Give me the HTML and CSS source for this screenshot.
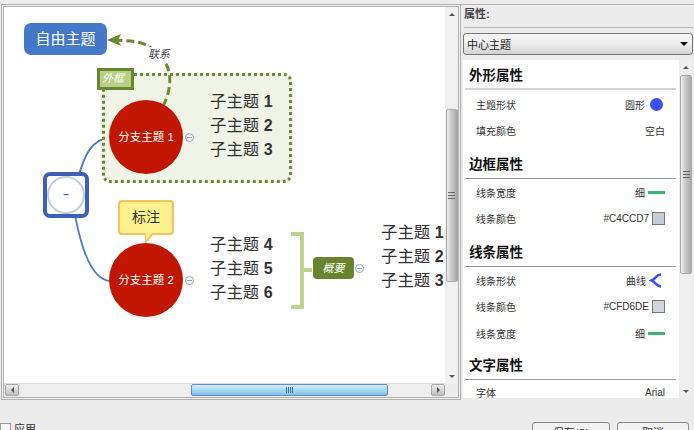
FILE: index.html
```html
<!DOCTYPE html>
<html lang="zh">
<head>
  <meta charset="UTF-8">
  <title>属性</title>
  <link rel="stylesheet" href="styles.css">
</head>
<body>
  <div class="main">
    <div class="editor">
      <div class="canvas">
        <div class="map">
          <svg class="lines" width="441" height="376" viewBox="0 0 441 376">
            <path class="branch" d="M72 171 C78 150 85 131 105 131"/>
            <path class="branch" d="M69 208 C75 240 85 274 105 274"/>
            <path class="bracket" d="M285 227 H296 V300 H285 M296 263 H306"/>
          </svg>

          <div class="node free-topic">自由主题</div>

          <div class="node boundary"></div>
          <div class="node boundary-label">外框</div>

          <svg class="lines" width="441" height="376" viewBox="0 0 441 376">
            <path class="relation" d="M157 99 C167 80 170 52 138 37 C128 33 118 34 112 33"/>
            <path class="arrow" d="M101 33 L115 27 L112 33 L115 39 Z"/>
          </svg>
          <div class="node relation-label">联系</div>

          <div class="node central"><span class="central-circle">–</span></div>

          <div class="node branch-topic branch-one">分支主题 1</div>
          <span class="node fold fold-one"></span>
          <div class="node subtopics subs-one">
            <div>子主题 <b>1</b></div>
            <div>子主题 <b>2</b></div>
            <div>子主题 <b>3</b></div>
          </div>

          <div class="node callout">标注</div>

          <div class="node branch-topic branch-two">分支主题 2</div>
          <span class="node fold fold-two"></span>
          <div class="node subtopics subs-two">
            <div>子主题 <b>4</b></div>
            <div>子主题 <b>5</b></div>
            <div>子主题 <b>6</b></div>
          </div>

          <div class="node summary">概要</div>
          <span class="node fold fold-three"></span>
          <div class="node subtopics subs-three">
            <div>子主题 <b>1</b></div>
            <div>子主题 <b>2</b></div>
            <div>子主题 <b>3</b></div>
          </div>
        </div>
      </div>

      <div class="vbar canvas-vbar">
        <span class="arrow-up"></span>
        <div class="vthumb"><span class="grip-h"></span></div>
        <span class="arrow-down"></span>
      </div>

      <div class="hbar">
        <span class="hbtn"><span class="arrow-left"></span></span>
        <div class="hthumb"><span class="grip-v"></span></div>
        <span class="hbtn"><span class="arrow-right"></span></span>
      </div>
      <div class="corner"></div>
    </div>

    <div class="side">
      <div class="side-title">属性:</div>
      <div class="combo">
        <span>中心主题</span>
        <span class="combo-arrow"></span>
      </div>
      <div class="props">
        <div class="props-body">
          <h3 class="first">外形属性</h3>
          <div class="row"><span>主题形状</span><span class="val">圆形 <i class="dot"></i></span></div>
          <div class="row"><span>填充颜色</span><span class="val">空白</span></div>

          <h3>边框属性</h3>
          <div class="row"><span>线条宽度</span><span class="val">细 <i class="dash"></i></span></div>
          <div class="row"><span>线条颜色</span><span class="val">#C4CCD7 <i class="swatch swatch-border"></i></span></div>

          <h3>线条属性</h3>
          <div class="row">
            <span>线条形状</span>
            <span class="val">曲线
              <svg class="curve" width="13" height="15" viewBox="0 0 13 15"><path d="M12 1.5 C7 1.5 7 6 2.5 7.5 C7 9 7 13.5 12 13.5"/></svg>
            </span>
          </div>
          <div class="row"><span>线条颜色</span><span class="val">#CFD6DE <i class="swatch swatch-line"></i></span></div>
          <div class="row"><span>线条宽度</span><span class="val">细 <i class="dash"></i></span></div>

          <h3 class="last">文字属性</h3>
          <div class="row"><span>字体</span><span class="val">Arial</span></div>
        </div>
        <div class="vbar props-vbar">
          <span class="arrow-up"></span>
          <div class="vthumb"><span class="grip-h"></span></div>
          <span class="arrow-down"></span>
        </div>
      </div>
    </div>
  </div>

  <div class="footer">
    <label class="apply"><i class="check"></i>应用</label>
    <div class="buttons">
      <button class="save-btn">保存(S)</button>
      <button class="cancel-btn">取消</button>
    </div>
  </div>
</body>
</html>
```

FILE: styles.css
```css
html, body {
  margin: 0;
  padding: 0;
}

body {
  width: 694px;
  height: 430px;
  overflow: hidden;
  background-color: #ececec;
  font-family: "Liberation Sans", "Noto Sans CJK SC", sans-serif;
  color: #333;
}

.main {
  display: flex;
  height: 396px;
  padding-top: 4px;
}

/* left side, the map */
.editor {
  margin-left: 1px;
  border: 3px double #b0b0b0;
  display: grid;
  grid-template-columns: 441px 13px;
  grid-template-rows: 376px 13px;
  background-color: #f0f0f0;
}

.canvas {
  position: relative;
  background-color: #fff;
  overflow: hidden;
}

.map {
  position: absolute;
  left: 2px;
  top: 0;
  width: 441px;
  height: 376px;
}

.lines {
  position: absolute;
  left: 0;
  top: 0;
}

.lines path {
  fill: none;
}

.lines .branch {
  stroke: #4a7bd0;
  stroke-width: 1.8;
}

.lines .relation {
  stroke: #6b8a2f;
  stroke-width: 3;
  stroke-dasharray: 8 4;
}

.lines .arrow {
  fill: #6b8a2f;
}

.lines .bracket {
  stroke: #bdd28e;
  stroke-width: 4;
}

.node {
  position: absolute;
  box-sizing: border-box;
}

.free-topic {
  left: 18px;
  top: 16px;
  width: 83px;
  height: 32px;
  background-color: #4478c8;
  border-radius: 7px;
  color: #fff;
  font-size: 15px;
  line-height: 32px;
  text-align: center;
}

.relation-label {
  left: 140px;
  top: 40px;
  font-size: 11px;
  font-style: italic;
  line-height: 14px;
  padding: 0 2px;
  color: #444;
  background-color: #fff;
}

.boundary {
  left: 96px;
  top: 66px;
  width: 190px;
  height: 110px;
  background-color: #f0f4e6;
  border: 3px dotted #6b8a2f;
  border-radius: 8px;
}

.boundary-label {
  left: 91px;
  top: 61px;
  width: 37px;
  height: 22px;
  background-color: #b9cf86;
  border: 3px solid #66872f;
  color: #fff;
  font-size: 11px;
  font-style: italic;
  line-height: 15px;
  padding-left: 2px;
}

.central {
  left: 37px;
  top: 165px;
  width: 46px;
  height: 46px;
  border: 4px solid #3d5fb8;
  border-radius: 7px;
  background-color: #fff;
}

.central-circle {
  display: block;
  box-sizing: border-box;
  width: 38px;
  height: 38px;
  border: 2px solid #c4ccd7;
  border-radius: 50%;
  color: #3d5fb8;
  font-size: 10px;
  font-weight: bold;
  line-height: 34px;
  text-align: center;
}

.branch-topic {
  left: 103px;
  width: 74px;
  height: 74px;
  border-radius: 50%;
  background-color: #c11700;
  color: #fff;
  font-size: 11.5px;
  line-height: 74px;
  text-align: center;
}

.branch-one {
  top: 93px;
}

.branch-two {
  top: 236px;
}

.fold {
  width: 9px;
  height: 9px;
  border: 1px solid #8aa6de;
  border-radius: 50%;
  background: linear-gradient(#8aa6de, #8aa6de) center / 5px 1px no-repeat #fff;
}

.fold-one {
  left: 179px;
  top: 126px;
}

.fold-two {
  left: 179px;
  top: 269px;
}

.fold-three {
  left: 349px;
  top: 257px;
}

.subtopics {
  font-size: 16.4px;
  color: #333;
  white-space: nowrap;
}

.subtopics div {
  height: 24px;
  line-height: 24px;
}

.subtopics b {
  font-size: 16px;
  line-height: 0;
}

.subs-one {
  left: 204px;
  top: 82px;
}

.subs-two {
  left: 204px;
  top: 225px;
}

.subs-three {
  left: 375px;
  top: 213px;
}

.callout {
  left: 112px;
  top: 193px;
  width: 56px;
  height: 35px;
  background-color: #fdf08e;
  border: 2px solid #f6c05c;
  border-radius: 4px;
  color: #333;
  font-size: 14px;
  line-height: 31px;
  text-align: center;
}

.callout::before,
.callout::after {
  content: "";
  position: absolute;
  width: 0;
  height: 0;
  border-right: 8px solid transparent;
}

.callout::before {
  left: 25px;
  bottom: -11px;
  border-top: 9px solid #f6c05c;
}

.callout::after {
  left: 26px;
  bottom: -7px;
  border-right-width: 6px;
  border-top: 7px solid #fdf08e;
}

.summary {
  left: 307px;
  top: 250px;
  width: 41px;
  height: 22px;
  background-color: #66852d;
  border-radius: 4px;
  color: #fff;
  font-size: 11px;
  font-style: italic;
  line-height: 22px;
  text-align: center;
}

/* scrollbars */
.vbar {
  display: flex;
  flex-direction: column;
  align-items: center;
  background-color: #f0f0f0;
}

.vthumb {
  width: 12px;
  display: flex;
  align-items: center;
  justify-content: center;
  background: linear-gradient(to right, #eee, #c8c8c8 45%, #a9a9a9);
  border: 1px solid #a8a8a8;
  border-radius: 2px;
  box-sizing: border-box;
}

.canvas-vbar .arrow-up {
  margin-top: 6px;
}

.canvas-vbar .vthumb {
  height: 173px;
  margin-top: 93px;
}

.canvas-vbar .arrow-down {
  margin-top: 93px;
}

.props-vbar .arrow-up {
  margin-top: 6px;
}

.props-vbar .vthumb {
  height: 199px;
  margin-top: 6px;
}

.props-vbar .arrow-down {
  margin-top: 116px;
}

.arrow-up,
.arrow-down {
  width: 0;
  height: 0;
  border-left: 3px solid transparent;
  border-right: 3px solid transparent;
}

.arrow-up {
  border-bottom: 3px solid #555;
}

.arrow-down {
  border-top: 3px solid #555;
}

.grip-h {
  width: 7px;
  height: 5px;
  border-top: 1px solid #666;
  border-bottom: 1px solid #666;
  background: linear-gradient(#666, #666) center / 100% 1px no-repeat;
}

.hbar {
  display: flex;
  align-items: flex-start;
  background-color: #eee;
  border-top: 1px solid #e0e0e0;
  box-sizing: border-box;
}

.hbtn {
  width: 14px;
  height: 12px;
  margin-left: 1px;
  display: flex;
  align-items: center;
  justify-content: center;
  box-sizing: border-box;
  border: 1px solid #a8a8a8;
  border-radius: 2px;
  background: linear-gradient(#eee, #bdbdbd);
}

.arrow-left,
.arrow-right {
  width: 0;
  height: 0;
  border-top: 3px solid transparent;
  border-bottom: 3px solid transparent;
}

.arrow-left {
  border-right: 3px solid #555;
}

.arrow-right {
  border-left: 3px solid #555;
}

.hthumb {
  width: 197px;
  height: 12px;
  margin-left: 172px;
  margin-right: 42px;
  display: flex;
  align-items: center;
  justify-content: center;
  box-sizing: border-box;
  border: 1px solid #5f8fc0;
  border-radius: 2px;
  background: linear-gradient(#d7ecfa, #a9d8f3 50%, #7fc1ea);
}

.grip-v {
  width: 7px;
  height: 6px;
  background: repeating-linear-gradient(to right, #3f6f9e 0 1px, transparent 1px 2px);
}

.corner {
  background-color: #ececec;
}

/* right side, the properties */
.side {
  width: 233px;
  box-sizing: border-box;
  padding: 0 1px 0 2px;
  border-top: 1px solid #b4b4b4;
  height: 394px;
}

.side-title {
  height: 22px;
  font-size: 11px;
  line-height: 18px;
  border-bottom: 1px solid #b8b8b8;
  font-weight: bold;
  color: #444;
  margin-left: 1px;
}

.combo {
  display: flex;
  justify-content: space-between;
  align-items: center;
  box-sizing: border-box;
  height: 22px;
  margin-top: 5px;
  padding: 0 4px 0 3px;
  border: 1px solid #777;
  border-radius: 3px;
  background: linear-gradient(#f4f4f4, #f0f0f0 45%, #d2d2d2);
  font-size: 11px;
  color: #222;
}

.combo-arrow {
  width: 0;
  height: 0;
  border-left: 4px solid transparent;
  border-right: 4px solid transparent;
  border-top: 4px solid #111;
}

.props {
  display: flex;
  height: 338px;
  margin-top: 5px;
  overflow: hidden;
}

.props-body {
  width: 216px;
  box-sizing: border-box;
  padding: 0 3px 0 2px;
  background-color: #fff;
  overflow: hidden;
}

.props-vbar {
  width: 14px;
  background-color: #eee;
}

.props-body h3 {
  margin: 10px 0 0;
  padding: 0 0 2px 4px;
  height: 22px;
  font-size: 13.5px;
  line-height: 21px;
  font-weight: bold;
  color: #111;
  border-bottom: 1px solid #999;
}

.props-body h3.first {
  margin: 5px 0 1px;
  border-bottom: 2px solid #d4d4d4;
  height: 21px;
}

.props-body h3.last {
  margin-top: 8px;
}

.row {
  display: flex;
  justify-content: space-between;
  align-items: center;
  height: 26.5px;
  padding: 0 11px;
  font-size: 10px;
  color: #333;
}

.val {
  display: flex;
  align-items: center;
  gap: 3px;
}

.dot {
  width: 13px;
  height: 13px;
  margin: 0 2px;
  border-radius: 50%;
  background-color: #3f50f0;
}

.dash {
  width: 17px;
  height: 3px;
  background-color: #3cb371;
}

.swatch {
  box-sizing: border-box;
  width: 13px;
  height: 13px;
  border: 1px solid #777;
}

.swatch-border {
  background-color: #c4ccd7;
}

.swatch-line {
  background-color: #cfd6de;
}

.curve {
  margin-right: 3px;
}

.curve path {
  fill: none;
  stroke: #3f50f0;
  stroke-width: 2.5;
}

/* bottom */
.footer {
  display: flex;
  justify-content: space-between;
  padding-top: 22px;
  padding-right: 5px;
  font-size: 11px;
}

.apply {
  display: flex;
  gap: 3px;
  align-items: flex-start;
  color: #333;
  line-height: 14px;
}

.check {
  width: 9px;
  height: 9px;
  margin-top: 1px;
  border: 1px solid #999;
  background-color: #f5f5f5;
}

.buttons {
  display: flex;
  gap: 7px;
}

.buttons button {
  height: 20px;
  padding: 0;
  border: 1px solid #888;
  border-radius: 3px;
  background: #f2f2f2;
  font: inherit;
  color: #333;
}

.save-btn {
  width: 78px;
}

.cancel-btn {
  width: 72px;
}
```
